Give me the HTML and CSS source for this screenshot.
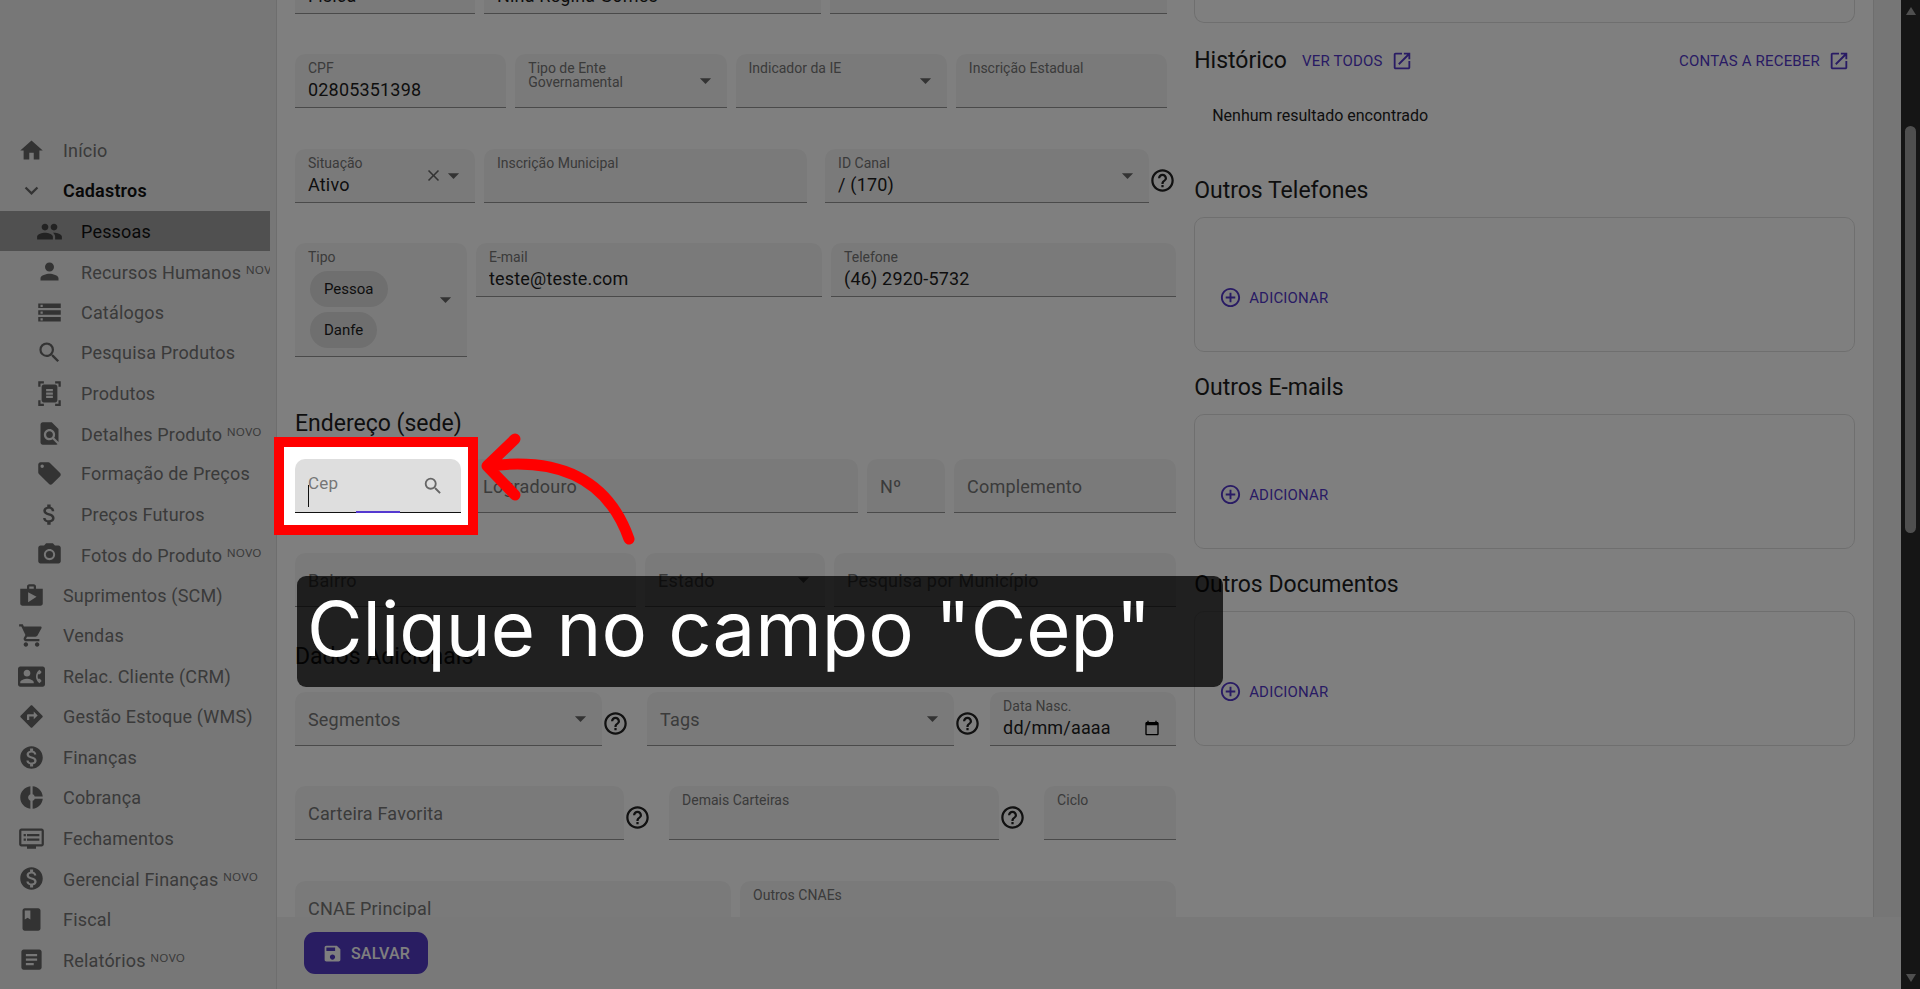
FILE: index.html
```html
<!DOCTYPE html>
<html lang="pt-BR">
<head>
<meta charset="utf-8">
<title>Cadastro de Pessoas</title>
<link rel="stylesheet" href="styles.css">
</head>
<body>
<svg class="sprite" aria-hidden="true">
  <symbol id="home" viewBox="0 0 24 24"><path d="M10 20v-6h4v6h5v-8h3L12 3 2 12h3v8z"/></symbol>
  <symbol id="more" viewBox="0 0 24 24"><path d="M16.59 8.59L12 13.17 7.41 8.59 6 10l6 6 6-6z"/></symbol>
  <symbol id="people" viewBox="0 0 24 24"><path d="M16 11c1.66 0 2.99-1.34 2.99-3S17.66 5 16 5s-3 1.34-3 3 1.34 3 3 3zm-8 0c1.66 0 2.99-1.34 2.99-3S9.66 5 8 5 5 6.34 5 8s1.34 3 3 3zm0 2c-2.33 0-7 1.17-7 3.5V19h14v-2.5c0-2.33-4.67-3.5-7-3.5zm8 0c-.29 0-.62.02-.97.05 1.16.84 1.97 1.97 1.97 3.45V19h6v-2.5c0-2.33-4.67-3.5-7-3.5z"/></symbol>
  <symbol id="person" viewBox="0 0 24 24"><path d="M12 12c2.21 0 4-1.79 4-4s-1.79-4-4-4-4 1.79-4 4 1.79 4 4 4zm0 2c-2.67 0-8 1.34-8 4v2h16v-2c0-2.66-5.33-4-8-4z"/></symbol>
  <symbol id="storage" viewBox="0 0 24 24"><path d="M2 20h20v-4H2v4zm2-3h2v2H4v-2zM2 4v4h20V4H2zm4 3H4V5h2v2zm-4 7h20v-4H2v4zm2-3h2v2H4v-2z"/></symbol>
  <symbol id="search" viewBox="0 0 24 24"><path d="M15.5 14h-.79l-.28-.27A6.471 6.471 0 0016 9.5 6.5 6.5 0 109.5 16c1.61 0 3.09-.59 4.23-1.57l.27.28v.79l5 4.99L20.49 19l-4.99-5zm-6 0C7.01 14 5 11.99 5 9.5S7.01 5 9.5 5 14 7.01 14 9.5 11.99 14 9.5 14z"/></symbol>
  <symbol id="scanner" viewBox="0 0 24 24"><path d="M7 3H4v3H2V1h5v2zm15 3V1h-5v2h3v3h2zM7 21H4v-3H2v5h5v-2zm13-3v3h-3v2h5v-5h-2zm-1 0c0 1.1-.9 2-2 2H7c-1.1 0-2-.9-2-2V6c0-1.1.9-2 2-2h10c1.1 0 2 .9 2 2v12zM15 8H9v2h6V8zm0 3H9v2h6v-2zm0 3H9v2h6v-2z"/></symbol>
  <symbol id="findpage" viewBox="0 0 24 24"><path d="M20 19.59V8l-6-6H6c-1.1 0-1.99.9-1.99 2L4 20c0 1.1.89 2 1.99 2H18c.45 0 .85-.15 1.19-.4l-4.43-4.43c-.8.52-1.74.83-2.76.83-2.76 0-5-2.24-5-5s2.24-5 5-5 5 2.24 5 5c0 1.02-.31 1.96-.83 2.75L20 19.59zM9 13c0 1.66 1.34 3 3 3s3-1.34 3-3-1.34-3-3-3-3 1.34-3 3z"/></symbol>
  <symbol id="offer" viewBox="0 0 24 24"><path d="M21.41 11.58l-9-9C12.05 2.22 11.55 2 11 2H4c-1.1 0-2 .9-2 2v7c0 .55.22 1.05.59 1.42l9 9c.36.36.86.58 1.41.58.55 0 1.05-.22 1.41-.59l7-7c.37-.36.59-.86.59-1.41 0-.55-.23-1.06-.59-1.42zM5.5 7C4.67 7 4 6.33 4 5.5S4.67 4 5.5 4 7 4.67 7 5.5 6.33 7 5.5 7z"/></symbol>
  <symbol id="money" viewBox="0 0 24 24"><path d="M11.8 10.9c-2.27-.59-3-1.2-3-2.15 0-1.09 1.01-1.85 2.7-1.85 1.78 0 2.44.85 2.5 2.1h2.21c-.07-1.72-1.12-3.3-3.21-3.81V3h-3v2.16c-1.94.42-3.5 1.68-3.5 3.61 0 2.31 1.91 3.46 4.7 4.13 2.5.6 3 1.48 3 2.41 0 .69-.49 1.79-2.7 1.79-2.06 0-2.87-.92-2.98-2.1h-2.2c.12 2.19 1.76 3.42 3.68 3.83V21h3v-2.15c1.95-.37 3.5-1.5 3.5-3.55 0-2.84-2.43-3.81-4.7-4.4z"/></symbol>
  <symbol id="camera" viewBox="0 0 24 24"><circle cx="12" cy="12" r="3.2"/><path d="M9 2L7.17 4H4c-1.1 0-2 .9-2 2v12c0 1.1.9 2 2 2h16c1.1 0 2-.9 2-2V6c0-1.1-.9-2-2-2h-3.17L15 2H9zm3 15c-2.76 0-5-2.24-5-5s2.24-5 5-5 5 2.24 5 5-2.24 5-5 5z"/></symbol>
  <symbol id="shop" viewBox="0 0 24 24"><path d="M16 6V4c0-1.11-.89-2-2-2h-4c-1.11 0-2 .89-2 2v2H2v13c0 1.11.89 2 2 2h16c1.11 0 2-.89 2-2V6h-6zm-6-2h4v2h-4V4zM9 18V9l7.5 4L9 18z"/></symbol>
  <symbol id="cart" viewBox="0 0 24 24"><path d="M7 18c-1.1 0-1.99.9-1.99 2S5.9 22 7 22s2-.9 2-2-.9-2-2-2zM1 2v2h2l3.6 7.59-1.35 2.45c-.16.28-.25.61-.25.96 0 1.1.9 2 2 2h12v-2H7.42c-.14 0-.25-.11-.25-.25l.03-.12.9-1.63h7.45c.75 0 1.41-.41 1.75-1.03l3.58-6.49c.08-.14.12-.31.12-.48 0-.55-.45-1-1-1H5.21l-.94-2H1zm16 16c-1.1 0-1.99.9-1.99 2s.89 2 1.99 2 2-.9 2-2-.9-2-2-2z"/></symbol>
  <symbol id="contact" viewBox="0 0 24 24"><path d="M22 3H2C.9 3 0 3.9 0 5v14c0 1.1.9 2 2 2h20c1.1 0 1.99-.9 1.99-2L24 5c0-1.1-.9-2-2-2zM8 6c1.66 0 3 1.34 3 3s-1.34 3-3 3-3-1.34-3-3 1.34-3 3-3zm6 12H2v-1c0-2 4-3.1 6-3.1s6 1.1 6 3.1v1zm3.85-4h1.64L21 16l-1.99 1.99c-1.31-.98-2.28-2.38-2.73-3.99-.18-.64-.28-1.31-.28-2s.1-1.36.28-2c.45-1.62 1.42-3.01 2.73-3.99L21 8l-1.51 2h-1.64c-.22.63-.35 1.3-.35 2s.13 1.37.35 2z"/></symbol>
  <symbol id="directions" viewBox="0 0 24 24"><path d="M21.71 11.29l-9-9c-.39-.39-1.02-.39-1.41 0l-9 9c-.39.39-.39 1.02 0 1.41l9 9c.39.39 1.02.39 1.41 0l9-9c.39-.38.39-1.01 0-1.41zM14 14.5V12h-4v3H8v-4c0-.55.45-1 1-1h5V7.5l3.5 3.5-3.5 3.5z"/></symbol>
  <symbol id="coin" viewBox="0 0 24 24"><path d="M12 2C6.48 2 2 6.48 2 12s4.48 10 10 10 10-4.48 10-10S17.52 2 12 2zm1.41 16.09V20h-2.67v-1.93c-1.71-.36-3.16-1.46-3.27-3.4h1.96c.1 1.05.82 1.87 2.65 1.87 1.96 0 2.4-.98 2.4-1.59 0-.83-.44-1.61-2.67-2.14-2.48-.6-4.18-1.62-4.18-3.67 0-1.72 1.39-2.84 3.11-3.21V4h2.67v1.95c1.86.45 2.79 1.86 2.85 3.39H14.3c-.05-1.11-.64-1.87-2.22-1.87-1.5 0-2.4.68-2.4 1.64 0 .84.65 1.39 2.67 1.91s4.18 1.39 4.18 3.91c-.01 1.83-1.38 2.83-3.12 3.16z"/></symbol>
  <symbol id="donut" viewBox="0 0 24 24"><path d="M11 9.16V2c-5 .5-9 4.79-9 10s4 9.5 9 10v-7.16c-1-.41-2-1.52-2-2.84s1-2.43 2-2.84zM14.86 11H22c-.48-4.75-4-8.53-9-9v7.16c1 .3 1.52.98 1.86 1.84zM13 14.84V22c5-.47 8.52-4.25 9-9h-7.14c-.34.86-.86 1.54-1.86 1.84z"/></symbol>
  <symbol id="dvr" viewBox="0 0 24 24"><path d="M21 3H3c-1.1 0-2 .9-2 2v12c0 1.1.9 2 2 2h5v2h8v-2h5c1.1 0 1.99-.9 1.99-2L23 5c0-1.1-.9-2-2-2zm0 14H3V5h18v12zm-2-9H8v2h11V8zm0 4H8v2h11v-2zM7 8H5v2h2V8zm0 4H5v2h2v-2z"/></symbol>
  <symbol id="book" viewBox="0 0 24 24"><path d="M18 2H6c-1.1 0-2 .9-2 2v16c0 1.1.9 2 2 2h12c1.1 0 2-.9 2-2V4c0-1.1-.9-2-2-2zM6 4h5v8l-2.5-1.5L6 12V4z"/></symbol>
  <symbol id="article" viewBox="0 0 24 24"><path d="M19 3H5c-1.1 0-2 .9-2 2v14c0 1.1.9 2 2 2h14c1.1 0 2-.9 2-2V5c0-1.1-.9-2-2-2zm-5 14H7v-2h7v2zm3-4H7v-2h10v2zm0-4H7V7h10v2z"/></symbol>
  <symbol id="open" viewBox="0 0 24 24"><path d="M19 19H5V5h7V3H5c-1.11 0-2 .9-2 2v14c0 1.1.89 2 2 2h14c1.1 0 2-.9 2-2v-7h-2v7zM14 3v2h3.59l-9.83 9.83 1.41 1.41L19 6.41V10h2V3h-7z"/></symbol>
  <symbol id="add" viewBox="0 0 24 24"><path d="M13 7h-2v4H7v2h4v4h2v-4h4v-2h-4V7zm-1-5C6.48 2 2 6.48 2 12s4.48 10 10 10 10-4.48 10-10S17.52 2 12 2zm0 18c-4.41 0-8-3.59-8-8s3.59-8 8-8 8 3.59 8 8-3.59 8-8 8z"/></symbol>
  <symbol id="help" viewBox="0 0 24 24"><path d="M11 18h2v-2h-2v2zm1-16C6.48 2 2 6.48 2 12s4.48 10 10 10 10-4.48 10-10S17.52 2 12 2zm0 18c-4.41 0-8-3.59-8-8s3.59-8 8-8 8 3.59 8 8-3.59 8-8 8zm0-14c-2.21 0-4 1.79-4 4h2c0-1.1.9-2 2-2s2 .9 2 2c0 2-3 1.75-3 5h2c0-2.25 3-2.5 3-5 0-2.21-1.79-4-4-4z"/></symbol>
  <symbol id="save" viewBox="0 0 24 24"><path d="M17 3H5c-1.11 0-2 .9-2 2v14c0 1.1.89 2 2 2h14c1.1 0 2-.9 2-2V7l-4-4zm-5 16c-1.66 0-3-1.34-3-3s1.34-3 3-3 3 1.34 3 3-1.34 3-3 3zm3-10H5V5h10v4z"/></symbol>
  <symbol id="calendar" viewBox="0 0 24 24"><path d="M20 3h-1V1h-2v2H7V1H5v2H4c-1.1 0-2 .9-2 2v16c0 1.1.9 2 2 2h16c1.1 0 2-.9 2-2V5c0-1.1-.9-2-2-2zm0 18H4V8h16v13z"/></symbol>
  <symbol id="drop" viewBox="0 0 24 24"><path d="M7 10l5 5 5-5z"/></symbol>
  <symbol id="close" viewBox="0 0 24 24"><path d="M19 6.41L17.59 5 12 10.59 6.41 5 5 6.41 10.59 12 5 17.59 6.41 19 12 13.41 17.59 19 19 17.59 13.41 12z"/></symbol>
</svg>

<div class="app">
  <aside class="sidebar">
    <nav class="menu" aria-label="Principal">
      <a class="item" href="#"><svg class="icon"><use href="#home"/></svg>Início</a>
      <a class="item group" href="#"><svg class="icon"><use href="#more"/></svg>Cadastros</a>
      <a class="item sub active" href="#"><svg class="icon"><use href="#people"/></svg>Pessoas</a>
      <a class="item sub" href="#"><svg class="icon"><use href="#person"/></svg>Recursos Humanos ᴺᴼⱽᴼ</a>
      <a class="item sub" href="#"><svg class="icon"><use href="#storage"/></svg>Catálogos</a>
      <a class="item sub" href="#"><svg class="icon"><use href="#search"/></svg>Pesquisa Produtos</a>
      <a class="item sub" href="#"><svg class="icon"><use href="#scanner"/></svg>Produtos</a>
      <a class="item sub" href="#"><svg class="icon"><use href="#findpage"/></svg>Detalhes Produto ᴺᴼⱽᴼ</a>
      <a class="item sub" href="#"><svg class="icon"><use href="#offer"/></svg>Formação de Preços</a>
      <a class="item sub" href="#"><svg class="icon"><use href="#money"/></svg>Preços Futuros</a>
      <a class="item sub" href="#"><svg class="icon"><use href="#camera"/></svg>Fotos do Produto ᴺᴼⱽᴼ</a>
      <a class="item" href="#"><svg class="icon"><use href="#shop"/></svg>Suprimentos (SCM)</a>
      <a class="item" href="#"><svg class="icon"><use href="#cart"/></svg>Vendas</a>
      <a class="item" href="#"><svg class="icon"><use href="#contact"/></svg>Relac. Cliente (CRM)</a>
      <a class="item" href="#"><svg class="icon"><use href="#directions"/></svg>Gestão Estoque (WMS)</a>
      <a class="item" href="#"><svg class="icon"><use href="#coin"/></svg>Finanças</a>
      <a class="item" href="#"><svg class="icon"><use href="#donut"/></svg>Cobrança</a>
      <a class="item" href="#"><svg class="icon"><use href="#dvr"/></svg>Fechamentos</a>
      <a class="item" href="#"><svg class="icon"><use href="#coin"/></svg>Gerencial Finanças ᴺᴼⱽᴼ</a>
      <a class="item" href="#"><svg class="icon"><use href="#book"/></svg>Fiscal</a>
      <a class="item" href="#"><svg class="icon"><use href="#article"/></svg>Relatórios ᴺᴼⱽᴼ</a>
    </nav>
  </aside>

  <div class="workspace">
    <main class="content">
      <div class="panel">
        <form class="form" id="cadastro">
          <div class="row row-name">
            <label class="field"><span class="body"><span class="name">Tipo Pessoa</span><input type="text" value="Física"></span></label>
            <label class="field"><span class="body"><span class="name">Nome</span><input type="text" value="Nina Regina Gomes"></span></label>
            <label class="field"><span class="body"><span class="name">Apelido</span><input type="text"></span></label>
          </div>
          <div class="row row-docs">
            <label class="field"><span class="body"><span class="name">CPF</span><input type="text" value="02805351398"></span></label>
            <label class="field"><span class="body"><span class="name">Tipo de Ente Governamental</span><select><option></option></select></span><svg class="icon drop"><use href="#drop"/></svg></label>
            <label class="field"><span class="body"><span class="name">Indicador da IE</span><select><option></option></select></span><svg class="icon drop"><use href="#drop"/></svg></label>
            <label class="field"><span class="body"><span class="name">Inscrição Estadual</span><input type="text"></span></label>
          </div>
          <div class="row row-status">
            <label class="field"><span class="body"><span class="name">Situação</span><select><option>Ativo</option></select></span><svg class="icon clear"><use href="#close"/></svg><svg class="icon drop"><use href="#drop"/></svg></label>
            <label class="field"><span class="body"><span class="name">Inscrição Municipal</span><input type="text"></span></label>
            <div class="with-help spaced">
              <label class="field"><span class="body"><span class="name">ID Canal</span><select><option>/ (170)</option></select></span><svg class="icon drop"><use href="#drop"/></svg></label>
              <svg class="icon help"><use href="#help"/></svg>
            </div>
          </div>
          <div class="row row-contact">
            <div class="field multi"><div class="body"><span class="name">Tipo</span><div class="chips"><span class="chip">Pessoa</span><span class="chip">Danfe</span></div></div><svg class="icon drop"><use href="#drop"/></svg></div>
            <label class="field"><span class="body"><span class="name">E-mail</span><input type="email" value="teste@teste.com"></span></label>
            <label class="field"><span class="body"><span class="name">Telefone</span><input type="tel" value="(46) 2920-5732"></span></label>
          </div>

          <h2 class="title title-address">Endereço (sede)</h2>
          <div class="row row-street">
            <label class="field rest focused"><span class="body"><span class="name">Cep</span><input type="text"></span><svg class="icon find"><use href="#search"/></svg><span class="caret"></span><span class="progress"></span></label>
            <label class="field rest"><span class="body"><span class="name">Logradouro</span><input type="text"></span></label>
            <label class="field rest"><span class="body"><span class="name">Nº</span><input type="text"></span></label>
            <label class="field rest"><span class="body"><span class="name">Complemento</span><input type="text"></span></label>
          </div>
          <div class="row row-city">
            <label class="field rest"><span class="body"><span class="name">Bairro</span><input type="text"></span></label>
            <label class="field rest"><span class="body"><span class="name">Estado</span><select><option></option></select></span><svg class="icon drop"><use href="#drop"/></svg></label>
            <label class="field rest"><span class="body"><span class="name">Pesquisa por Município</span><input type="text"></span></label>
          </div>

          <h2 class="title title-extra">Dados Adicionais</h2>
          <div class="row row-tags">
            <div class="with-help">
              <label class="field rest"><span class="body"><span class="name">Segmentos</span><select><option></option></select></span><svg class="icon drop"><use href="#drop"/></svg></label>
              <svg class="icon help"><use href="#help"/></svg>
            </div>
            <div class="with-help spaced">
              <label class="field rest"><span class="body"><span class="name">Tags</span><select><option></option></select></span><svg class="icon drop"><use href="#drop"/></svg></label>
              <svg class="icon help"><use href="#help"/></svg>
            </div>
            <label class="field"><span class="body"><span class="name">Data Nasc.</span><input type="text" value="dd/mm/aaaa"></span><svg class="icon date"><use href="#calendar"/></svg></label>
          </div>
          <div class="row row-wallet">
            <div class="with-help">
              <label class="field rest"><span class="body"><span class="name">Carteira Favorita</span><input type="text"></span></label>
              <svg class="icon help"><use href="#help"/></svg>
            </div>
            <div class="with-help spaced">
              <label class="field"><span class="body"><span class="name">Demais Carteiras</span><input type="text"></span></label>
              <svg class="icon help"><use href="#help"/></svg>
            </div>
            <label class="field spaced"><span class="body"><span class="name">Ciclo</span><input type="text"></span></label>
          </div>
          <div class="row row-cnae">
            <label class="field rest"><span class="body"><span class="name">CNAE Principal</span><input type="text"></span></label>
            <label class="field"><span class="body"><span class="name">Outros CNAEs</span><input type="text"></span></label>
          </div>
        </form>

        <div class="side">
          <div class="card card-cut"></div>
          <div class="history">
            <h2 class="title">Histórico</h2>
            <a class="link" href="#">VER TODOS<svg class="icon"><use href="#open"/></svg></a>
            <a class="link link-end" href="#">CONTAS A RECEBER<svg class="icon"><use href="#open"/></svg></a>
          </div>
          <p class="empty">Nenhum resultado encontrado</p>
          <h2 class="title">Outros Telefones</h2>
          <section class="card"><button class="add" type="button"><svg class="icon"><use href="#add"/></svg>ADICIONAR</button></section>
          <h2 class="title">Outros E-mails</h2>
          <section class="card"><button class="add" type="button"><svg class="icon"><use href="#add"/></svg>ADICIONAR</button></section>
          <h2 class="title">Outros Documentos</h2>
          <section class="card"><button class="add" type="button"><svg class="icon"><use href="#add"/></svg>ADICIONAR</button></section>
        </div>
      </div>
    </main>
    <footer class="actions">
      <button class="save" type="submit" form="cadastro"><svg class="icon"><use href="#save"/></svg>SALVAR</button>
    </footer>
  </div>

  <div class="scrollbar" aria-hidden="true">
    <svg class="step" viewBox="0 0 12 10"><path d="M6 1L11 9H1z"/></svg>
    <div class="track"><div class="thumb"></div></div>
    <svg class="step" viewBox="0 0 12 10"><path d="M6 9L1 1h10z"/></svg>
  </div>
</div>

<div class="tour">
  <div class="spotlight"></div>
  <svg class="arrow" viewBox="0 0 160 120"><path d="M10 36C80 27 129 49 150 109M36 9L8 36L36 65"/></svg>
  <div class="caption">Clique no campo "Cep"</div>
</div>
</body>
</html>
```
FILE: styles.css
```css
* { box-sizing: border-box; }

body {
  margin: 0;
  overflow: hidden;
  background: #fff;
  color: #1d1d1d;
  font-family: Roboto, "Noto Sans", sans-serif;
  font-size: 18px;
  letter-spacing: 0.01em;
}

a { color: inherit; text-decoration: none; }
button { border: 0; padding: 0; font: inherit; letter-spacing: inherit; cursor: pointer; }

.sprite { display: none; }
.icon { flex: none; width: 27px; height: 27px; fill: currentColor; }

.app { display: flex; height: 100vh; }

/* Sidebar */
.sidebar {
  flex: none;
  display: flex;
  width: 277px;
  background: #eee;
  border-right: 1px solid #dcdcdc;
}
.menu {
  display: flex;
  flex-direction: column;
  width: 270px;
  padding: 130px 0 9px;
  overflow: hidden;
}
.item {
  flex: 1;
  display: flex;
  align-items: center;
  gap: 18px;
  padding-left: 18px;
  color: #757575;
  white-space: nowrap;
}
.item .icon { color: #666; }
.item.sub { padding-left: 36px; }
.item.group { color: #111; font-weight: 600; }
.item.active { background: #a0a0a0; color: #111; }
.item.active .icon { color: #444; }

/* Workspace */
.workspace {
  flex: 1;
  min-width: 0;
  display: flex;
  flex-direction: column;
  background: #ececec;
}
.content { flex: 1; min-height: 0; overflow: hidden; }
.panel {
  display: flex;
  gap: 18px;
  min-height: 100%;
  margin-right: 27px;
  padding: 0 18px;
  background: #fff;
  border-right: 1px solid #dcdcdc;
}
.form { flex: 4; min-width: 0; margin-top: -40px; }
.side { flex: 3; min-width: 0; }

/* Form rows */
.row {
  display: grid;
  column-gap: 9px;
  align-items: start;
  margin-bottom: 40px;
}
.row-name { grid-template-columns: 180fr 337fr 337fr; padding-right: 9px; }
.row-docs { grid-template-columns: repeat(4, 1fr); padding-right: 9px; margin-bottom: 41px; }
.row-status { grid-template-columns: 180fr 323fr 360fr; }
.row-contact { grid-template-columns: 172fr 346fr 345fr; }
.row-street { grid-template-columns: 166fr 388fr 78fr 222fr; }
.row-city { grid-template-columns: 341fr 180fr 342fr; margin-bottom: 36px; }
.row-tags { grid-template-columns: 334fr 343fr 186fr; }
.row-wallet { grid-template-columns: 356fr 366fr 141fr; margin-bottom: 41px; }
.row-cnae { grid-template-columns: 1fr 1fr; }
.spaced { margin-left: 9px; }

.with-help { display: flex; align-items: flex-start; min-width: 0; }
.with-help .field { flex: 1; }
.help { margin-top: 18px; color: #222; }

.field {
  position: relative;
  display: flex;
  align-items: center;
  min-width: 0;
  min-height: 54px;
  padding: 0 8px 0 13px;
  background: #f5f5f5;
  border-bottom: 1px solid #949494;
  border-radius: 10px 10px 0 0;
}
.body {
  flex: 1;
  min-width: 0;
  display: grid;
  grid-template-rows: 19px 25px;
  padding-bottom: 1px;
}
.name {
  padding-top: 3px;
  color: #767676;
  font-size: 14px;
  line-height: 14px;
  letter-spacing: normal;
}
.field input,
.field select {
  width: 100%;
  min-width: 0;
  margin: 0;
  padding: 0;
  border: 0;
  outline: 0;
  appearance: none;
  background: none;
  color: #1d1d1d;
  font: inherit;
  letter-spacing: inherit;
}
.rest .body { grid-template-rows: 53px; padding: 0; }
.rest .name,
.rest input,
.rest select { grid-area: 1 / 1; }
.rest .name {
  padding: 0;
  font-size: 18px;
  line-height: 55px;
  letter-spacing: inherit;
  white-space: nowrap;
}

.drop { color: #666; }
.clear { width: 19px; height: 19px; margin-right: -3px; color: #666; }
.date { width: 16px; height: 16px; margin: 18px 8px 0 0; color: #000; }

.multi .body { display: block; }
.multi .name { display: block; padding-top: 7px; }
.chips {
  display: flex;
  flex-direction: column;
  align-items: flex-start;
  gap: 5px;
  padding: 7px 0 7px 2px;
}
.chip {
  padding: 0 14px;
  border-radius: 18px;
  background: #dedede;
  font-size: 15px;
  line-height: 36px;
  letter-spacing: normal;
}

.focused { background: #dedede; border-color: #111; }
.focused .name { font-size: 17px; line-height: 49px; }
.find { width: 22px; height: 22px; margin-right: 9px; color: #666; }
.caret {
  position: absolute;
  left: 13px;
  top: 26px;
  width: 1px;
  height: 22px;
  background: #111;
}
.progress {
  position: absolute;
  left: 37%;
  bottom: -1px;
  width: 44px;
  height: 2px;
  background: #5438d0;
}

.title {
  margin: 0;
  font-size: 23px;
  font-weight: 400;
  line-height: 28px;
  letter-spacing: normal;
}
.title-address { margin: 53px 0 21px; }
.title-extra { margin: 0 0 21px; }

/* Right column */
.card {
  display: flex;
  align-items: flex-end;
  min-height: 135px;
  margin: 12px 0 22px;
  padding: 42px 24px;
  border: 1px solid #dfdfdf;
  border-radius: 10px;
}
.card-cut { min-height: 23px; margin: 0 0 24px; padding: 0; border-top: 0; border-radius: 0 0 10px 10px; }
.history { display: flex; align-items: center; gap: 15px; }
.link {
  display: flex;
  align-items: center;
  gap: 8px;
  color: #5237c8;
  font-size: 15px;
}
.link .icon { width: 22px; height: 22px; }
.link-end { margin: 0 5px 0 auto; }
.empty {
  margin: 30px 0 50px;
  padding-left: 18px;
  font-size: 16px;
  line-height: 22px;
  letter-spacing: normal;
}
.add {
  display: flex;
  align-items: center;
  gap: 7px;
  background: none;
  color: #5237c8;
  font-size: 15px;
}
.add .icon { width: 23px; height: 23px; }

/* Footer */
.actions { flex: none; padding: 15px 27px; background: #f3f3f3; }
.save {
  display: flex;
  align-items: center;
  gap: 8px;
  height: 42px;
  padding: 0 18px;
  border-radius: 11px;
  background: #523ac4;
  color: #fff;
  font-size: 16px;
  font-weight: 500;
}
.save .icon { width: 21px; height: 21px; }

/* Scrollbar */
.scrollbar {
  flex: none;
  display: flex;
  flex-direction: column;
  align-items: center;
  width: 19px;
  padding: 6px 0;
  background: #2b2b2b;
}
.step { width: 12px; height: 10px; fill: #9f9f9f; }
.track { flex: 1; padding-top: 110px; }
.thumb { width: 11px; height: 48%; border-radius: 6px; background: #9f9f9f; }

/* Guided tour layer */
.tour { position: absolute; inset: 0; overflow: hidden; pointer-events: none; }
.spotlight {
  position: absolute;
  left: 274px;
  top: 437px;
  width: 204px;
  height: 98px;
  border: 10px solid #f00;
  box-shadow: 0 0 0 2000px rgba(0, 0, 0, 0.5);
}
.arrow {
  position: absolute;
  left: 479px;
  top: 430px;
  width: 160px;
  height: 120px;
  fill: none;
  stroke: #f00;
  stroke-width: 11;
  stroke-linecap: round;
  stroke-linejoin: round;
}
.caption {
  position: absolute;
  left: 297px;
  top: 576px;
  width: 926px;
  padding: 0 10px 7px;
  border-radius: 9px;
  background: rgba(0, 0, 0, 0.75);
  color: #fff;
  font-family: Inter, sans-serif;
  font-size: 76px;
  line-height: 104px;
  letter-spacing: normal;
  white-space: nowrap;
}
```
